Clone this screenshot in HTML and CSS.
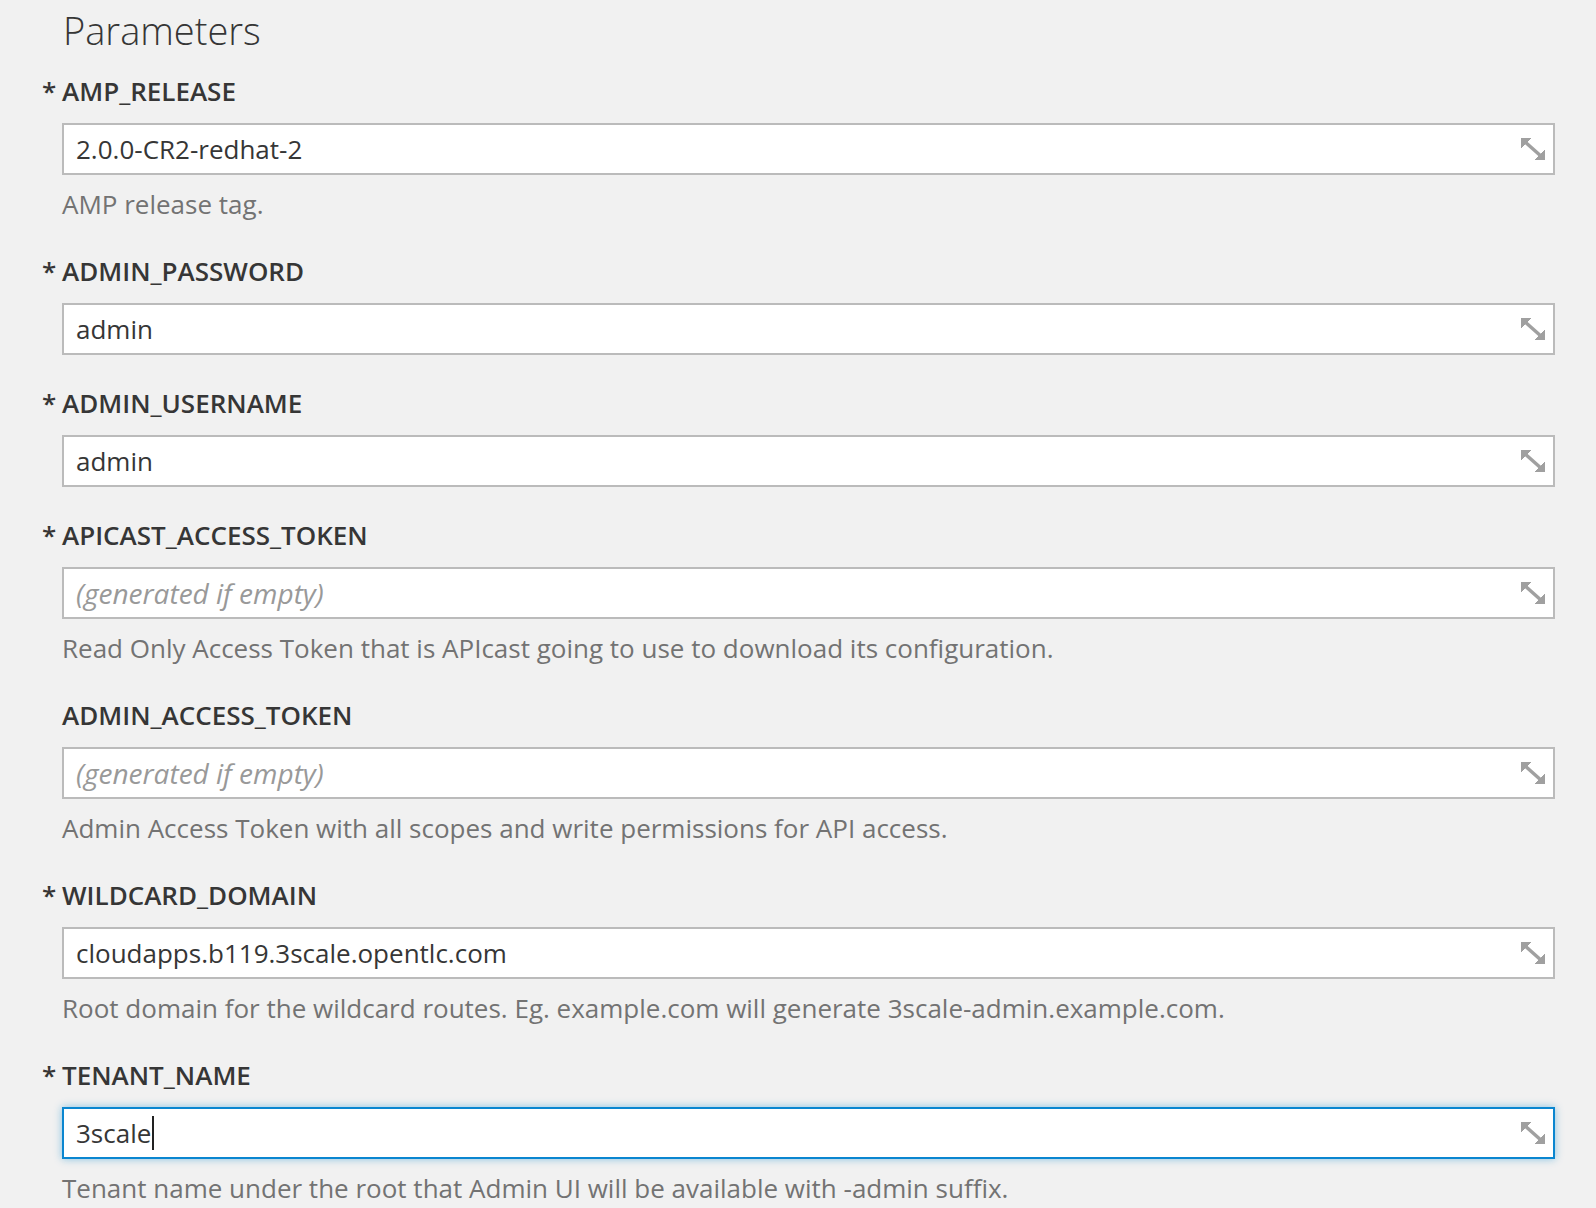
FILE: index.html
```html
<!DOCTYPE html>
<html lang="en">
<head>
<meta charset="utf-8">
<title>Parameters</title>
<link rel="stylesheet" href="styles.css">
</head>
<body>
<div class="page">
  <h3 class="title">Parameters</h3>

  <div class="form-group">
    <div class="label required">AMP_RELEASE</div>
    <div class="input"><span class="value">2.0.0-CR2-redhat-2</span><svg class="expand" viewBox="0 0 24 22" width="24" height="22"><polygon points="0,0 10,0 0,10"/><line x1="3" y1="3" x2="21" y2="19"/><polygon points="24,22 14,22 24,12"/></svg></div>
    <div class="help">AMP release tag.</div>
  </div>

  <div class="form-group">
    <div class="label required">ADMIN_PASSWORD</div>
    <div class="input"><span class="value">admin</span><svg class="expand" viewBox="0 0 24 22" width="24" height="22"><polygon points="0,0 10,0 0,10"/><line x1="3" y1="3" x2="21" y2="19"/><polygon points="24,22 14,22 24,12"/></svg></div>
  </div>

  <div class="form-group">
    <div class="label required">ADMIN_USERNAME</div>
    <div class="input"><span class="value">admin</span><svg class="expand" viewBox="0 0 24 22" width="24" height="22"><polygon points="0,0 10,0 0,10"/><line x1="3" y1="3" x2="21" y2="19"/><polygon points="24,22 14,22 24,12"/></svg></div>
  </div>

  <div class="form-group">
    <div class="label required">APICAST_ACCESS_TOKEN</div>
    <div class="input"><span class="placeholder">(generated if empty)</span><svg class="expand" viewBox="0 0 24 22" width="24" height="22"><polygon points="0,0 10,0 0,10"/><line x1="3" y1="3" x2="21" y2="19"/><polygon points="24,22 14,22 24,12"/></svg></div>
    <div class="help">Read Only Access Token that is APIcast going to use to download its configuration.</div>
  </div>

  <div class="form-group">
    <div class="label">ADMIN_ACCESS_TOKEN</div>
    <div class="input"><span class="placeholder">(generated if empty)</span><svg class="expand" viewBox="0 0 24 22" width="24" height="22"><polygon points="0,0 10,0 0,10"/><line x1="3" y1="3" x2="21" y2="19"/><polygon points="24,22 14,22 24,12"/></svg></div>
    <div class="help">Admin Access Token with all scopes and write permissions for API access.</div>
  </div>

  <div class="form-group">
    <div class="label required">WILDCARD_DOMAIN</div>
    <div class="input"><span class="value">cloudapps.b119.3scale.opentlc.com</span><svg class="expand" viewBox="0 0 24 22" width="24" height="22"><polygon points="0,0 10,0 0,10"/><line x1="3" y1="3" x2="21" y2="19"/><polygon points="24,22 14,22 24,12"/></svg></div>
    <div class="help">Root domain for the wildcard routes. Eg. example.com will generate 3scale-admin.example.com.</div>
  </div>

  <div class="form-group">
    <div class="label required">TENANT_NAME</div>
    <div class="input focused"><span class="value">3scale</span><span class="caret"></span><svg class="expand" viewBox="0 0 24 22" width="24" height="22"><polygon points="0,0 10,0 0,10"/><line x1="3" y1="3" x2="21" y2="19"/><polygon points="24,22 14,22 24,12"/></svg></div>
    <div class="help">Tenant name under the root that Admin UI will be available with -admin suffix.</div>
  </div>
</div>
</body>
</html>
```

FILE: styles.css
```css
html, body {
  margin: 0;
  padding: 0;
  background: #f1f1f1;
}

body {
  font-family: "Open Sans", "Noto Sans", sans-serif;
  color: #363636;
  overflow: hidden;
}

.page {
  padding: 8px 41px 0 62px;
}

.title {
  margin: 0 0 19px 1px;
  font-size: 38px;
  font-weight: 300;
  line-height: 44px;
  color: #363636;
}

.form-group {
  margin-bottom: 28px;
}

.label {
  font-size: 26px;
  font-weight: 600;
  line-height: 40px;
  margin-bottom: 12px;
  color: #363636;
}

.label.required::before {
  content: "*";
  display: inline-block;
  width: 20px;
  margin-left: -20px;
}

.input {
  display: flex;
  align-items: center;
  height: 52px;
  box-sizing: border-box;
  border: 2px solid #bbbbbb;
  background: #ffffff;
  padding: 0 8px 0 12px;
  font-size: 26px;
  color: #363636;
}

.input.focused {
  border-color: #0a86d0;
  box-shadow: 0 0 8px rgba(0, 136, 206, 0.45);
}

.value {
  white-space: nowrap;
}

.placeholder {
  font-size: 28px;
  font-style: italic;
  color: #999999;
  white-space: nowrap;
}

.caret {
  display: inline-block;
  width: 2px;
  height: 34px;
  background: #222;
  margin-left: 1px;
}

.expand {
  margin-left: auto;
  fill: #a0a0a0;
  stroke: #a0a0a0;
  flex: none;
}

.expand line {
  stroke-width: 3.5;
}

.help {
  margin-top: 11px;
  font-size: 26px;
  line-height: 37px;
  color: #737373;
}
```
